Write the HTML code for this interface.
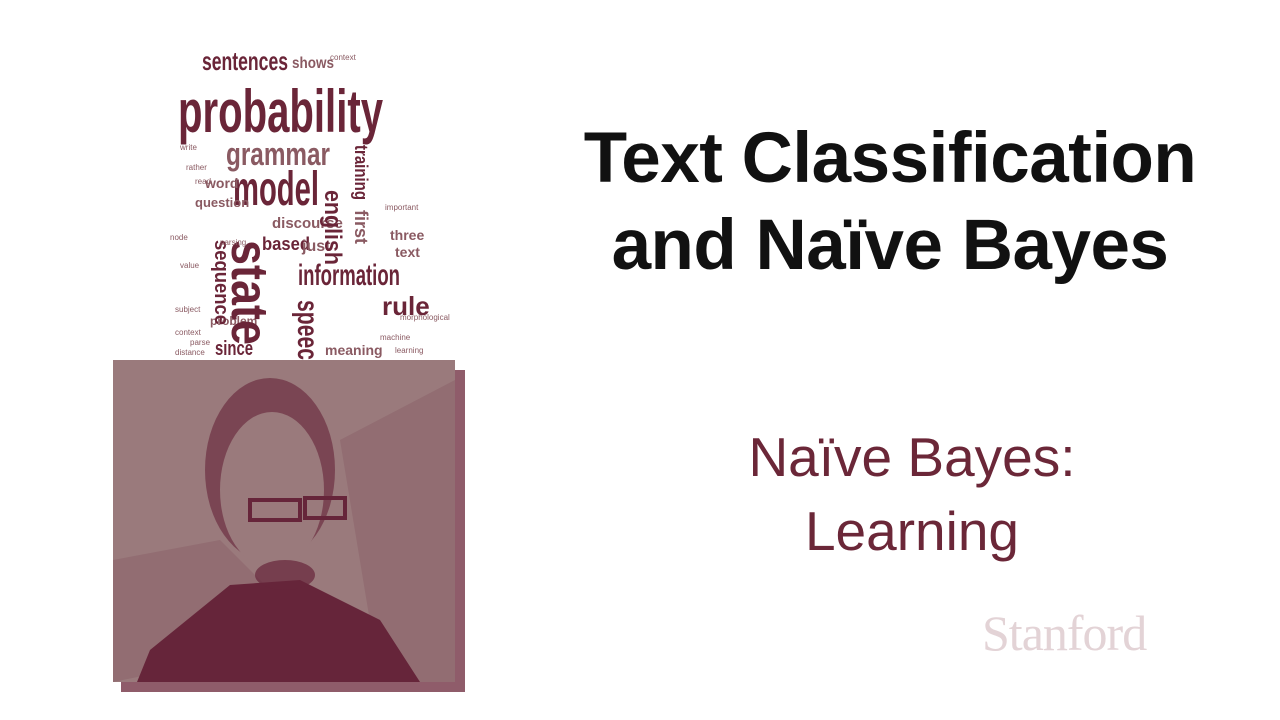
<!DOCTYPE html>
<html><head><meta charset="utf-8"><style>
html,body{margin:0;padding:0;width:1280px;height:720px;background:#fff;overflow:hidden}
body{position:relative;font-family:"Liberation Sans",sans-serif}
.t{position:absolute;left:510px;width:760px;text-align:center;font-weight:bold;font-size:71px;color:#111;line-height:1;letter-spacing:-0.5px}
.s{position:absolute;left:637px;width:550px;text-align:center;font-size:55px;color:#6b2738;line-height:1}
</style></head><body>
<svg width="480" height="720" style="position:absolute;left:0;top:0" font-family="Liberation Sans Narrow,Liberation Sans,sans-serif">
<g fill="#6a2538" font-weight="bold">
<text x="202" y="70" font-size="26" textLength="86" lengthAdjust="spacingAndGlyphs">sentences</text>
<text x="292" y="68" font-size="16" fill="#8a5a62" textLength="42" lengthAdjust="spacingAndGlyphs">shows</text>
<text x="178" y="132" font-size="60" textLength="205" lengthAdjust="spacingAndGlyphs">probability</text>
<text x="226" y="165" font-size="32" fill="#8a5a62" textLength="104" lengthAdjust="spacingAndGlyphs">grammar</text>
<text x="233" y="205" font-size="48" textLength="86" lengthAdjust="spacingAndGlyphs">model</text>
<text x="205" y="188" font-size="14" fill="#8a5a62">word</text>
<text x="195" y="207" font-size="13" fill="#8a5a62">question</text>
<text x="272" y="228" font-size="15" fill="#8a5a62">discourse</text>
<text x="262" y="250" font-size="18" textLength="48" lengthAdjust="spacingAndGlyphs">based</text>
<text x="302" y="251" font-size="16" fill="#8a5a62">just</text>
<text x="298" y="285" font-size="30" textLength="102" lengthAdjust="spacingAndGlyphs">information</text>
<text x="382" y="315" font-size="26">rule</text>
<text x="215" y="355" font-size="20" textLength="38" lengthAdjust="spacingAndGlyphs">since</text>
<text x="325" y="355" font-size="14" fill="#8a5a62">meaning</text>
<text x="210" y="325" font-size="12" fill="#8a5a62">problem</text>
<text x="390" y="240" font-size="14" fill="#8a5a62">three</text>
<text x="395" y="257" font-size="14" fill="#8a5a62">text</text>
<text transform="translate(325,190) rotate(90)" font-size="24" textLength="75" lengthAdjust="spacingAndGlyphs">english</text>
<text transform="translate(232,240) rotate(90)" font-size="52" textLength="105" lengthAdjust="spacingAndGlyphs">state</text>
<text transform="translate(298,300) rotate(90)" font-size="30" textLength="60" lengthAdjust="spacingAndGlyphs">speec</text>
<text transform="translate(215,240) rotate(90)" font-size="20" textLength="85" lengthAdjust="spacingAndGlyphs">sequence</text>
<text transform="translate(355,210) rotate(90)" font-size="18" fill="#8a5a62">first</text>
<text transform="translate(355,145) rotate(90)" font-size="18" textLength="55" lengthAdjust="spacingAndGlyphs">training</text>
</g>
<g fill="#8a5a62" font-size="8">
<text x="180" y="150">write</text><text x="186" y="170">rather</text><text x="195" y="184">read</text>
<text x="385" y="210">important</text><text x="180" y="268">value</text><text x="175" y="312">subject</text>
<text x="175" y="335">context</text><text x="400" y="320">morphological</text><text x="380" y="340">machine</text>
<text x="395" y="353">learning</text><text x="175" y="355">distance</text><text x="190" y="345">parse</text>
<text x="330" y="60">context</text><text x="220" y="245">parsing</text><text x="170" y="240">node</text>
</g>
<rect x="121" y="370" width="344" height="322" fill="#6a2538" opacity=".75"/>
<rect x="113" y="360" width="342" height="322" fill="#9a7a7c"/>
<path d="M113 560 L220 540 L280 600 L220 660 L113 682 Z" fill="#8a6068" opacity=".5"/>
<path d="M340 440 L455 380 L455 682 L380 682 Z" fill="#8a6068" opacity=".5"/>
<ellipse cx="270" cy="470" rx="65" ry="92" fill="#7a4553"/>
<ellipse cx="272" cy="490" rx="52" ry="78" fill="#9a7a7c"/>
<path d="M137 682 L150 650 L230 585 L300 580 L380 620 L420 682 Z" fill="#66253a"/>
<path d="M250 500 h50 v20 h-50z M305 498 h40 v20 h-40z" fill="none" stroke="#66253a" stroke-width="4"/>
<ellipse cx="285" cy="575" rx="30" ry="15" fill="#66253a" opacity=".7"/>
</svg>
<div class="t" style="top:123px">Text Classification</div>
<div class="t" style="top:210px">and Naïve Bayes</div>
<div class="s" style="top:430px">Naïve Bayes:</div>
<div class="s" style="top:504px">Learning</div>
<div style="position:absolute;left:982px;top:604px;font-family:'Liberation Serif',serif;font-size:50px;color:#e3d3d6;letter-spacing:-1px">Stanford</div>
</body></html>
